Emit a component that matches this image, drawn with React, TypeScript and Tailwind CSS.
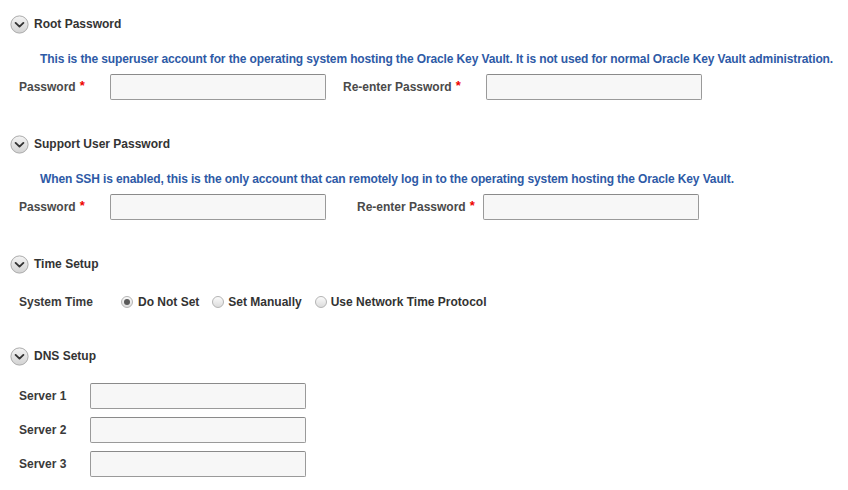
import React from "react";

const ChevronIcon = () => (
  <svg width="19" height="19" viewBox="0 0 19 19" className="shrink-0">
    <defs>
      <linearGradient id="cg" x1="0" y1="0" x2="0" y2="1">
        <stop offset="0" stopColor="#f4f4f4" />
        <stop offset="1" stopColor="#d2d2d2" />
      </linearGradient>
    </defs>
    <circle cx="9.5" cy="9.5" r="8.6" fill="url(#cg)" stroke="#a9a9a9" strokeWidth="1" />
    <path d="M5.6 7.9 L9.5 11.6 L13.4 7.9" fill="none" stroke="#333" strokeWidth="1.9" strokeLinecap="round" strokeLinejoin="round" />
  </svg>
);

const Radio = ({ checked }: { checked?: boolean }) => (
  <span className="relative inline-flex w-[12px] h-[12px] rounded-full border border-[#b4b4b4] bg-gradient-to-b from-[#fbfbfb] to-[#dcdcdc] items-center justify-center shrink-0">
    {checked && <span className="w-[6px] h-[6px] rounded-full bg-[#5a5a5a]" />}
  </span>
);

const Input = ({ w = "w-[216px]" }: { w?: string }) => (
  <div className={`${w} h-[26px] border border-[#9a9a9a] border-t-[#8a8a8a] rounded-[2px] bg-[#f7f7f7] shrink-0`} />
);

const Heading = ({ title }: { title: string }) => (
  <div className="flex items-center h-[20px] pl-[10px] gap-[5px]">
    <ChevronIcon />
    <span className="text-[#333]">{title}</span>
  </div>
);

const Req = () => <span className="text-[#e00] ml-[4px] text-[13px] leading-none relative -top-[2px]">*</span>;

export default function App() {
  return (
    <div
      className="w-[848px] h-[490px] bg-white text-[12px] font-bold pt-[14px] overflow-hidden"
      style={{ fontFamily: '"Liberation Sans", Arial, sans-serif' }}
    >
      {/* Root Password */}
      <Heading title="Root Password" />
      <div className="mt-[17px] h-[16px] leading-[16px] pl-[40px] text-[#2e5aa6] whitespace-nowrap tracking-[-0.12px]">
        This is the superuser account for the operating system hosting the Oracle Key Vault. It is not used for normal Oracle Key Vault administration.
      </div>
      <div className="mt-[7px] flex items-center h-[26px]">
        <div className="w-[110px] pl-[19px] flex items-center text-[#4a4a4a]">
          <span>Password</span>
          <Req />
        </div>
        <Input />
        <div className="w-[160px] pl-[17px] flex items-center text-[#4a4a4a]">
          <span>Re-enter Password</span>
          <Req />
        </div>
        <Input />
      </div>

      {/* Support User Password */}
      <div className="mt-[34px]">
        <Heading title="Support User Password" />
      </div>
      <div className="mt-[17px] h-[16px] leading-[16px] pl-[40px] text-[#2e5aa6] whitespace-nowrap tracking-[-0.12px]">
        When SSH is enabled, this is the only account that can remotely log in to the operating system hosting the Oracle Key Vault.
      </div>
      <div className="mt-[7px] flex items-center h-[26px]">
        <div className="w-[110px] pl-[19px] flex items-center text-[#4a4a4a]">
          <span>Password</span>
          <Req />
        </div>
        <Input />
        <div className="w-[157px] pl-[31px] flex items-center text-[#4a4a4a]">
          <span>Re-enter Password</span>
          <Req />
        </div>
        <Input />
      </div>

      {/* Time Setup */}
      <div className="mt-[34px]">
        <Heading title="Time Setup" />
      </div>
      <div className="mt-[18px] flex items-center h-[20px]">
        <div className="w-[121px] pl-[19px] text-[#3a3a3a]">System Time</div>
        <label className="flex items-center gap-[5px] text-[#333]">
          <Radio checked />
          <span>Do Not Set</span>
        </label>
        <label className="flex items-center gap-[4px] ml-[13px] text-[#333]">
          <Radio />
          <span>Set Manually</span>
        </label>
        <label className="flex items-center gap-[4px] ml-[13px] text-[#333]">
          <Radio />
          <span>Use Network Time Protocol</span>
        </label>
      </div>

      {/* DNS Setup */}
      <div className="mt-[34px]">
        <Heading title="DNS Setup" />
      </div>
      <div className="mt-[17px] flex flex-col gap-[8px]">
        {["Server 1", "Server 2", "Server 3"].map((s) => (
          <div key={s} className="flex items-center h-[26px]">
            <div className="w-[90px] pl-[19px] text-[#3a3a3a]">{s}</div>
            <Input />
          </div>
        ))}
      </div>
    </div>
  );
}
